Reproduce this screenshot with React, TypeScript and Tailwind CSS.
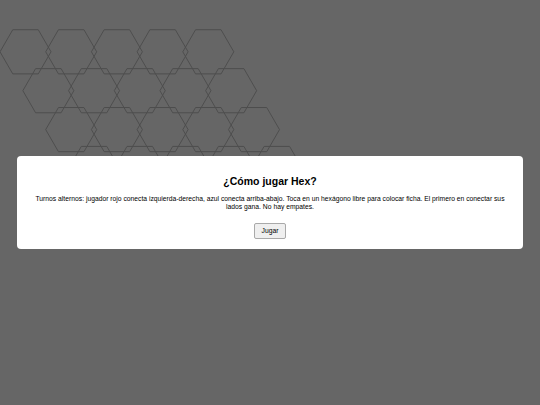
import React from "react";

const R = 25.5;
const ROWS = 5;
const COLS = 5;

function hexPoints(cx: number, cy: number) {
  const pts: string[] = [];
  for (let k = 0; k < 6; k++) {
    const a = (Math.PI / 3) * k;
    pts.push(`${(cx + R * Math.cos(a)).toFixed(2)},${(cy + R * Math.sin(a)).toFixed(2)}`);
  }
  return pts.join(" ");
}

function Board() {
  const cells: { key: string; points: string }[] = [];
  for (let r = 0; r < ROWS; r++) {
    for (let c = 0; c < COLS; c++) {
      const cx = 25.5 + c * 45.7 + r * 22.85;
      const cy = 51.8 + r * 38.9;
      cells.push({ key: `${r}-${c}`, points: hexPoints(cx, cy) });
    }
  }
  return (
    <svg width="320" height="260" viewBox="0 0 320 260" className="block">
      {cells.map((cell) => (
        <polygon key={cell.key} points={cell.points} fill="none" stroke="#4e4e4e" strokeWidth="1" />
      ))}
    </svg>
  );
}

export default function App() {
  return (
    <div className="w-[540px] h-[405px] bg-[#666666] overflow-hidden" style={{ fontFamily: '"Liberation Sans", Arial, sans-serif' }}>
      <Board />
      {/* help dialog */}
      <div className="fixed inset-0 flex items-center justify-center px-[17px]">
        <div className="w-full bg-white rounded-[4px] pt-[19px] pb-[9px] px-[16px] text-center text-black">
          <h2 className="text-[10.5px] leading-[13px] font-bold">¿Cómo jugar Hex?</h2>
          <p className="mt-[7px] text-[6.75px] leading-[7.5px]">
            Turnos alternos: jugador rojo conecta izquierda-derecha, azul conecta arriba-abajo. Toca en un hexágono libre para colocar ficha. El primero en conectar sus lados gana. No hay empates.
          </p>
          <button className="mt-[13px] h-[16px] px-[7px] text-[6.75px] bg-[#efefef] border border-[#a9a9a9] rounded-[2px] text-black">
            Jugar
          </button>
        </div>
      </div>
    </div>
  );
}
